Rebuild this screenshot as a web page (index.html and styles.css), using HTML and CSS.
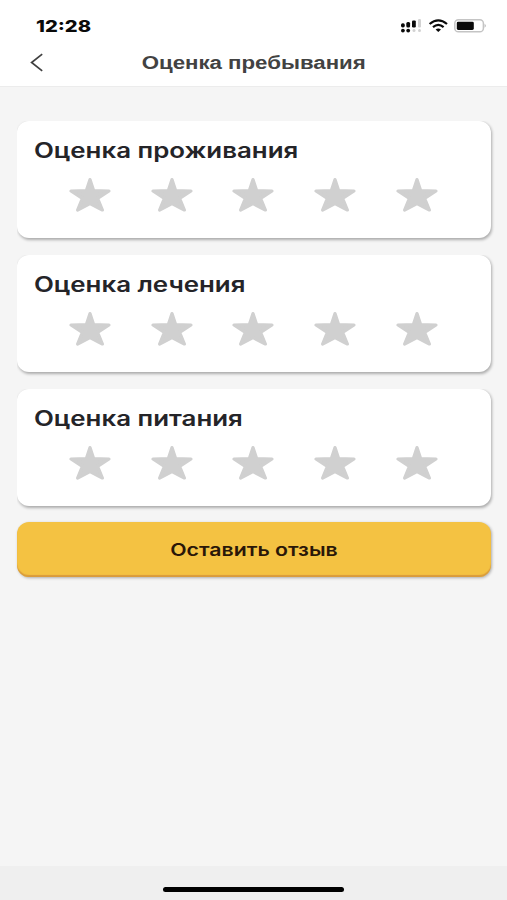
FILE: index.html
```html
<!DOCTYPE html>
<html lang="ru">
<head>
<meta charset="utf-8">
<title>Оценка пребывания</title>
<link rel="stylesheet" href="styles.css">
</head>
<body>
<svg class="defs" width="0" height="0" aria-hidden="true">
  <symbol id="star" viewBox="0 0 42 36">
    <path d="M21 2.6 L24.7 13.7 L40 14 L28.6 21.4 L33.4 33 L21 26.6 L8.6 33 L13.4 21.4 L2 14 L17.3 13.7 Z" fill="#d0d0d0" stroke="#d0d0d0" stroke-width="3.2" stroke-linejoin="round"/>
  </symbol>
</svg>
<div class="screen">
  <header class="header">
    <div class="status">
      <span class="time">12:28</span>
      <svg class="status-icons" width="86" height="18" viewBox="0 0 86 18">
        <g fill="#0a0a0a">
          <rect x="1" y="6.3" width="3.8" height="4.2" rx="1.7"/>
          <rect x="6.3" y="5" width="3.8" height="5.5" rx="1.5"/>
          <rect x="12" y="3.4" width="3.8" height="7.1" rx="1.2"/>
          <rect x="1" y="11.7" width="3.8" height="3.8" rx="1.9"/>
          <rect x="6.3" y="11.7" width="3.8" height="3.8" rx="1.9"/>
        </g>
        <g fill="#d2d2d2">
          <rect x="18" y="2" width="3" height="8.5" rx="1.2"/>
          <circle cx="14" cy="13.6" r="1.5"/>
          <circle cx="19.5" cy="13.6" r="1.5"/>
        </g>
        <g fill="none" stroke="#0a0a0a" stroke-width="2.2">
          <path d="M29.6 7 Q38.3 -.4 47 7"/>
          <path d="M33 10.1 Q38.3 5.5 43.6 10.1"/>
        </g>
        <path d="M35.6 12.4 Q38.3 10.4 41 12.4 L38.3 15 Z" fill="#0a0a0a"/>
        <rect x="54.8" y="2.8" width="28.6" height="12" rx="3.6" fill="#fff" stroke="#c4c4c4" stroke-width="1.5"/>
        <rect x="56.8" y="4.7" width="17" height="8.3" rx="1.4" fill="#0a0a0a"/>
        <path d="M84.6 6.8 Q87 8.8 84.6 10.8 Z" fill="#b4b4b4"/>
      </svg>
    </div>
    <div class="navbar">
      <svg class="back" width="14" height="19" viewBox="0 0 14 19"><path d="M12.2 1.2 L1.6 9.5 L12.2 17.8" fill="none" stroke="#404040" stroke-width="1.7"/></svg>
      <h1 class="heading">Оценка пребывания</h1>
    </div>
  </header>
  <main class="content">
    <section class="card">
      <h2 class="title">Оценка проживания</h2>
      <div class="stars">
        <svg><use href="#star"/></svg><svg><use href="#star"/></svg><svg><use href="#star"/></svg><svg><use href="#star"/></svg><svg><use href="#star"/></svg>
      </div>
    </section>
    <section class="card">
      <h2 class="title">Оценка лечения</h2>
      <div class="stars">
        <svg><use href="#star"/></svg><svg><use href="#star"/></svg><svg><use href="#star"/></svg><svg><use href="#star"/></svg><svg><use href="#star"/></svg>
      </div>
    </section>
    <section class="card">
      <h2 class="title">Оценка питания</h2>
      <div class="stars">
        <svg><use href="#star"/></svg><svg><use href="#star"/></svg><svg><use href="#star"/></svg><svg><use href="#star"/></svg><svg><use href="#star"/></svg>
      </div>
    </section>
    <button class="submit" type="button"><span class="submit-label">Оставить отзыв</span></button>
  </main>
  <footer class="footer"><div class="home"></div></footer>
</div>
</body>
</html>
```

FILE: styles.css
```css
* { box-sizing: border-box; }
body { margin: 0; font-family: Inter, "Liberation Sans", sans-serif; }
.defs { display: block; }
.screen { width: 507px; height: 900px; display: flex; flex-direction: column; background: #f5f5f5; overflow: hidden; }
.header { height: 87px; background: #fff; border-bottom: 1px solid #ececec; }
.status { display: flex; justify-content: space-between; align-items: center; height: 40px; padding: 11px 21px 0 36px; }
.time { font-size: 16px; line-height: 20px; font-weight: 800; color: #0a0a0a; transform: scaleX(1.26); transform-origin: left; }
.status-icons { display: block; }
.navbar { display: grid; grid-template-columns: 44px 1fr 44px; align-items: center; height: 45px; }
.back { margin-left: 30px; }
.heading { margin: 0; justify-self: center; font-family: "Liberation Sans", Arial, sans-serif; font-size: 18px; line-height: 24px; font-weight: 700; color: #424242; white-space: nowrap; transform: scaleX(1.235); }
.content { flex: 1; display: flex; flex-direction: column; gap: 17px; padding: 34px 16px 0 17px; }
.card { height: 117px; padding: 15px 17px 0; background: #fff; border-radius: 12px; box-shadow: 1px 1.5px 3px rgba(0, 0, 0, .3); clip-path: inset(0 -6px -6px 0); }
.title { margin: 0; width: max-content; font-size: 21px; line-height: 30px; font-weight: 600; color: #242428; white-space: nowrap; transform: scaleX(1.231); transform-origin: left; }
.stars { display: flex; justify-content: space-around; margin: 11px 16px 0 15px; }
.stars svg { display: block; width: 42px; height: 36px; }
.submit { height: 55px; margin-top: -1px; padding: 1px 0 0; border: 0; border-radius: 12px; background: #f4c242; box-shadow: 1px 1px 3px rgba(0, 0, 0, .3), inset 0 -2px 1px #d99b3c; font-family: inherit; }
.submit-label { display: inline-block; font-size: 17px; line-height: 24px; font-weight: 600; color: #2a1708; transform: scaleX(1.25); }
.footer { height: 34px; display: flex; justify-content: center; padding-top: 21px; background: #efefef; }
.home { width: 181px; height: 5px; border-radius: 3px; background: #000; }
```
